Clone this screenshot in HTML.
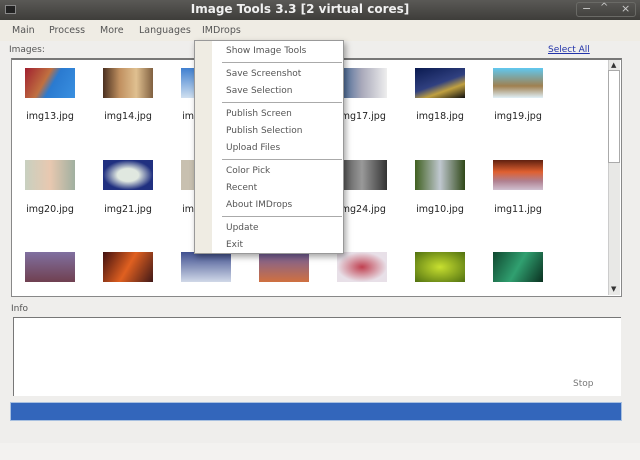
<!DOCTYPE html>
<html><head><meta charset="utf-8"><style>
*{margin:0;padding:0;box-sizing:border-box}
body{width:640px;height:460px;background:#efeeec;font-family:"DejaVu Sans","Liberation Sans",sans-serif;font-size:9px;color:#333;position:relative;overflow:hidden}
.a{position:absolute}
#title{left:0;top:0;width:640px;height:20px;background:linear-gradient(#5a5956,#3e3d3a);}
#title .t{left:0;width:600px;top:2px;text-align:center;color:#f0f0f0;font-size:12px;font-weight:bold;text-indent:0}
#menu{left:0;top:20px;width:640px;height:21px;background:#efece4}
#menu span{position:absolute;top:5px;color:#555;font-size:9.5px}
.th{position:absolute;width:50px;height:30px}
.lb{position:absolute;width:78px;text-align:center;font-size:9.5px;color:#222}
#pop{left:194px;top:40px;width:150px;height:214px;background:#fff;border:1px solid #999;box-shadow:2px 3px 6px rgba(0,0,0,.35)}
#pop .g{left:0;top:0;width:17px;height:212px;background:#efece3}
#pop .i{position:absolute;left:31px;font-size:9px;color:#555}
#pop .s{position:absolute;left:27px;width:120px;height:1px;background:#aaa}
</style></head><body>
<div class="a" id="title">
<div class="a" style="left:5px;top:5px;width:11px;height:9px;background:#222;border:1px solid #888"></div>
<div class="a t">Image Tools 3.3 [2 virtual cores]</div>
<div class="a" style="left:576px;top:2px;width:60px;height:15px;border:1px solid #6a6a66;border-radius:3px"></div>
<div class="a" style="left:582px;top:2px;color:#ccc;font-size:11px">−</div>
<div class="a" style="left:600px;top:2px;color:#ccc;font-size:10px">^</div>
<div class="a" style="left:621px;top:2px;color:#ccc;font-size:11px">×</div>
</div>
<div class="a" id="menu">
<span style="left:12px">Main</span><span style="left:49px">Process</span><span style="left:100px">More</span><span style="left:139px">Languages</span><span style="left:202px">IMDrops</span>
</div>
<div class="a" style="left:9px;top:45px;font-size:9px;color:#555">Images:</div>
<div class="a" style="left:548px;top:45px;font-size:9px;color:#2233aa;text-decoration:underline">Select All</div>
<div class="a" style="left:11px;top:58px;width:611px;height:239px;background:#fff;border:1px solid #888;border-top:2px solid #777"></div>
<div class="a" style="left:608px;top:60px;width:12px;height:235px;background:#e8e8e6;border-left:1px solid #ccc"></div>
<div class="a" style="left:608px;top:70px;width:12px;height:93px;background:#fff;border:1px solid #aaa"></div>
<div class="a" style="left:611px;top:61px;font-size:7px;color:#333">▲</div>
<div class="a" style="left:611px;top:285px;font-size:7px;color:#333">▼</div>

<div class="th" style="left:25px;top:68px;background:linear-gradient(120deg,#a02030,#c07040 40%,#2a7ad0 55%,#3a90e0)"></div>
<div class="th" style="left:103px;top:68px;background:linear-gradient(90deg,#4a3020,#c09060,#e0c090,#806040)"></div>
<div class="th" style="left:181px;top:68px;background:linear-gradient(#4080d0,#d0e0f0)"></div>
<div class="th" style="left:337px;top:68px;background:linear-gradient(90deg,#305a90,#aab,#eee)"></div>
<div class="th" style="left:415px;top:68px;background:linear-gradient(160deg,#0a1a50,#304080 50%,#c0a040 70%,#111)"></div>
<div class="th" style="left:493px;top:68px;background:linear-gradient(#60c8f0,#a08050 60%,#e0f0f8)"></div>
<div class="th" style="left:25px;top:160px;background:linear-gradient(90deg,#c8d0c0,#e8c8b0,#a0b0a0)"></div>
<div class="th" style="left:103px;top:160px;background:radial-gradient(#e0e8e0 30%,#203080 70%)"></div>
<div class="th" style="left:181px;top:160px;background:#c8c0b0"></div>
<div class="th" style="left:337px;top:160px;background:linear-gradient(90deg,#444,#999,#333)"></div>
<div class="th" style="left:415px;top:160px;background:linear-gradient(90deg,#406020,#c0c8d0,#304818)"></div>
<div class="th" style="left:493px;top:160px;background:linear-gradient(#602010,#e06030 40%,#b08090 70%,#d0c0d0)"></div>
<div class="th" style="left:25px;top:252px;background:linear-gradient(#8070a0,#704050)"></div>
<div class="th" style="left:103px;top:252px;background:linear-gradient(120deg,#401010,#e06020,#401818)"></div>
<div class="th" style="left:181px;top:252px;background:linear-gradient(#405090,#d0d8e8)"></div>
<div class="th" style="left:259px;top:252px;background:linear-gradient(#7060a0,#d07040)"></div>
<div class="th" style="left:337px;top:252px;background:radial-gradient(#c04050,#e8e0e8 70%)"></div>
<div class="th" style="left:415px;top:252px;background:radial-gradient(#c8e030,#507010)"></div>
<div class="th" style="left:493px;top:252px;background:linear-gradient(120deg,#104830,#30a070,#0a3020)"></div>

<div class="lb" style="left:11px;top:111px">img13.jpg</div>
<div class="lb" style="left:89px;top:111px">img14.jpg</div>
<div class="lb" style="left:167px;top:111px">img15.jpg</div>
<div class="lb" style="left:323px;top:111px">img17.jpg</div>
<div class="lb" style="left:401px;top:111px">img18.jpg</div>
<div class="lb" style="left:479px;top:111px">img19.jpg</div>
<div class="lb" style="left:11px;top:204px">img20.jpg</div>
<div class="lb" style="left:89px;top:204px">img21.jpg</div>
<div class="lb" style="left:167px;top:204px">img22.jpg</div>
<div class="lb" style="left:323px;top:204px">img24.jpg</div>
<div class="lb" style="left:401px;top:204px">img10.jpg</div>
<div class="lb" style="left:479px;top:204px">img11.jpg</div>

<div class="a" id="pop">
<div class="a g"></div>
<div class="i" style="top:5px">Show Image Tools</div>
<div class="s" style="top:21px"></div>
<div class="i" style="top:28px">Save Screenshot</div>
<div class="i" style="top:45px">Save Selection</div>
<div class="s" style="top:61px"></div>
<div class="i" style="top:68px">Publish Screen</div>
<div class="i" style="top:85px">Publish Selection</div>
<div class="i" style="top:102px">Upload Files</div>
<div class="s" style="top:118px"></div>
<div class="i" style="top:125px">Color Pick</div>
<div class="i" style="top:142px">Recent</div>
<div class="i" style="top:159px">About IMDrops</div>
<div class="s" style="top:175px"></div>
<div class="i" style="top:182px">Update</div>
<div class="i" style="top:199px">Exit</div>
</div>

<div class="a" style="left:11px;top:304px;font-size:9px;color:#555">Info</div>
<div class="a" style="left:13px;top:317px;width:608px;height:79px;background:#fff;border-top:1px solid #777;border-left:1px solid #777"></div>
<div class="a" style="left:573px;top:379px;font-size:9px;color:#777">Stop</div>
<div class="a" style="left:10px;top:402px;width:612px;height:19px;background:#3366bb;border:1px solid #a8c0e0"></div>
<div class="a" style="left:0;top:443px;width:640px;height:17px;background:#f3f2f0"></div>
</body></html>
